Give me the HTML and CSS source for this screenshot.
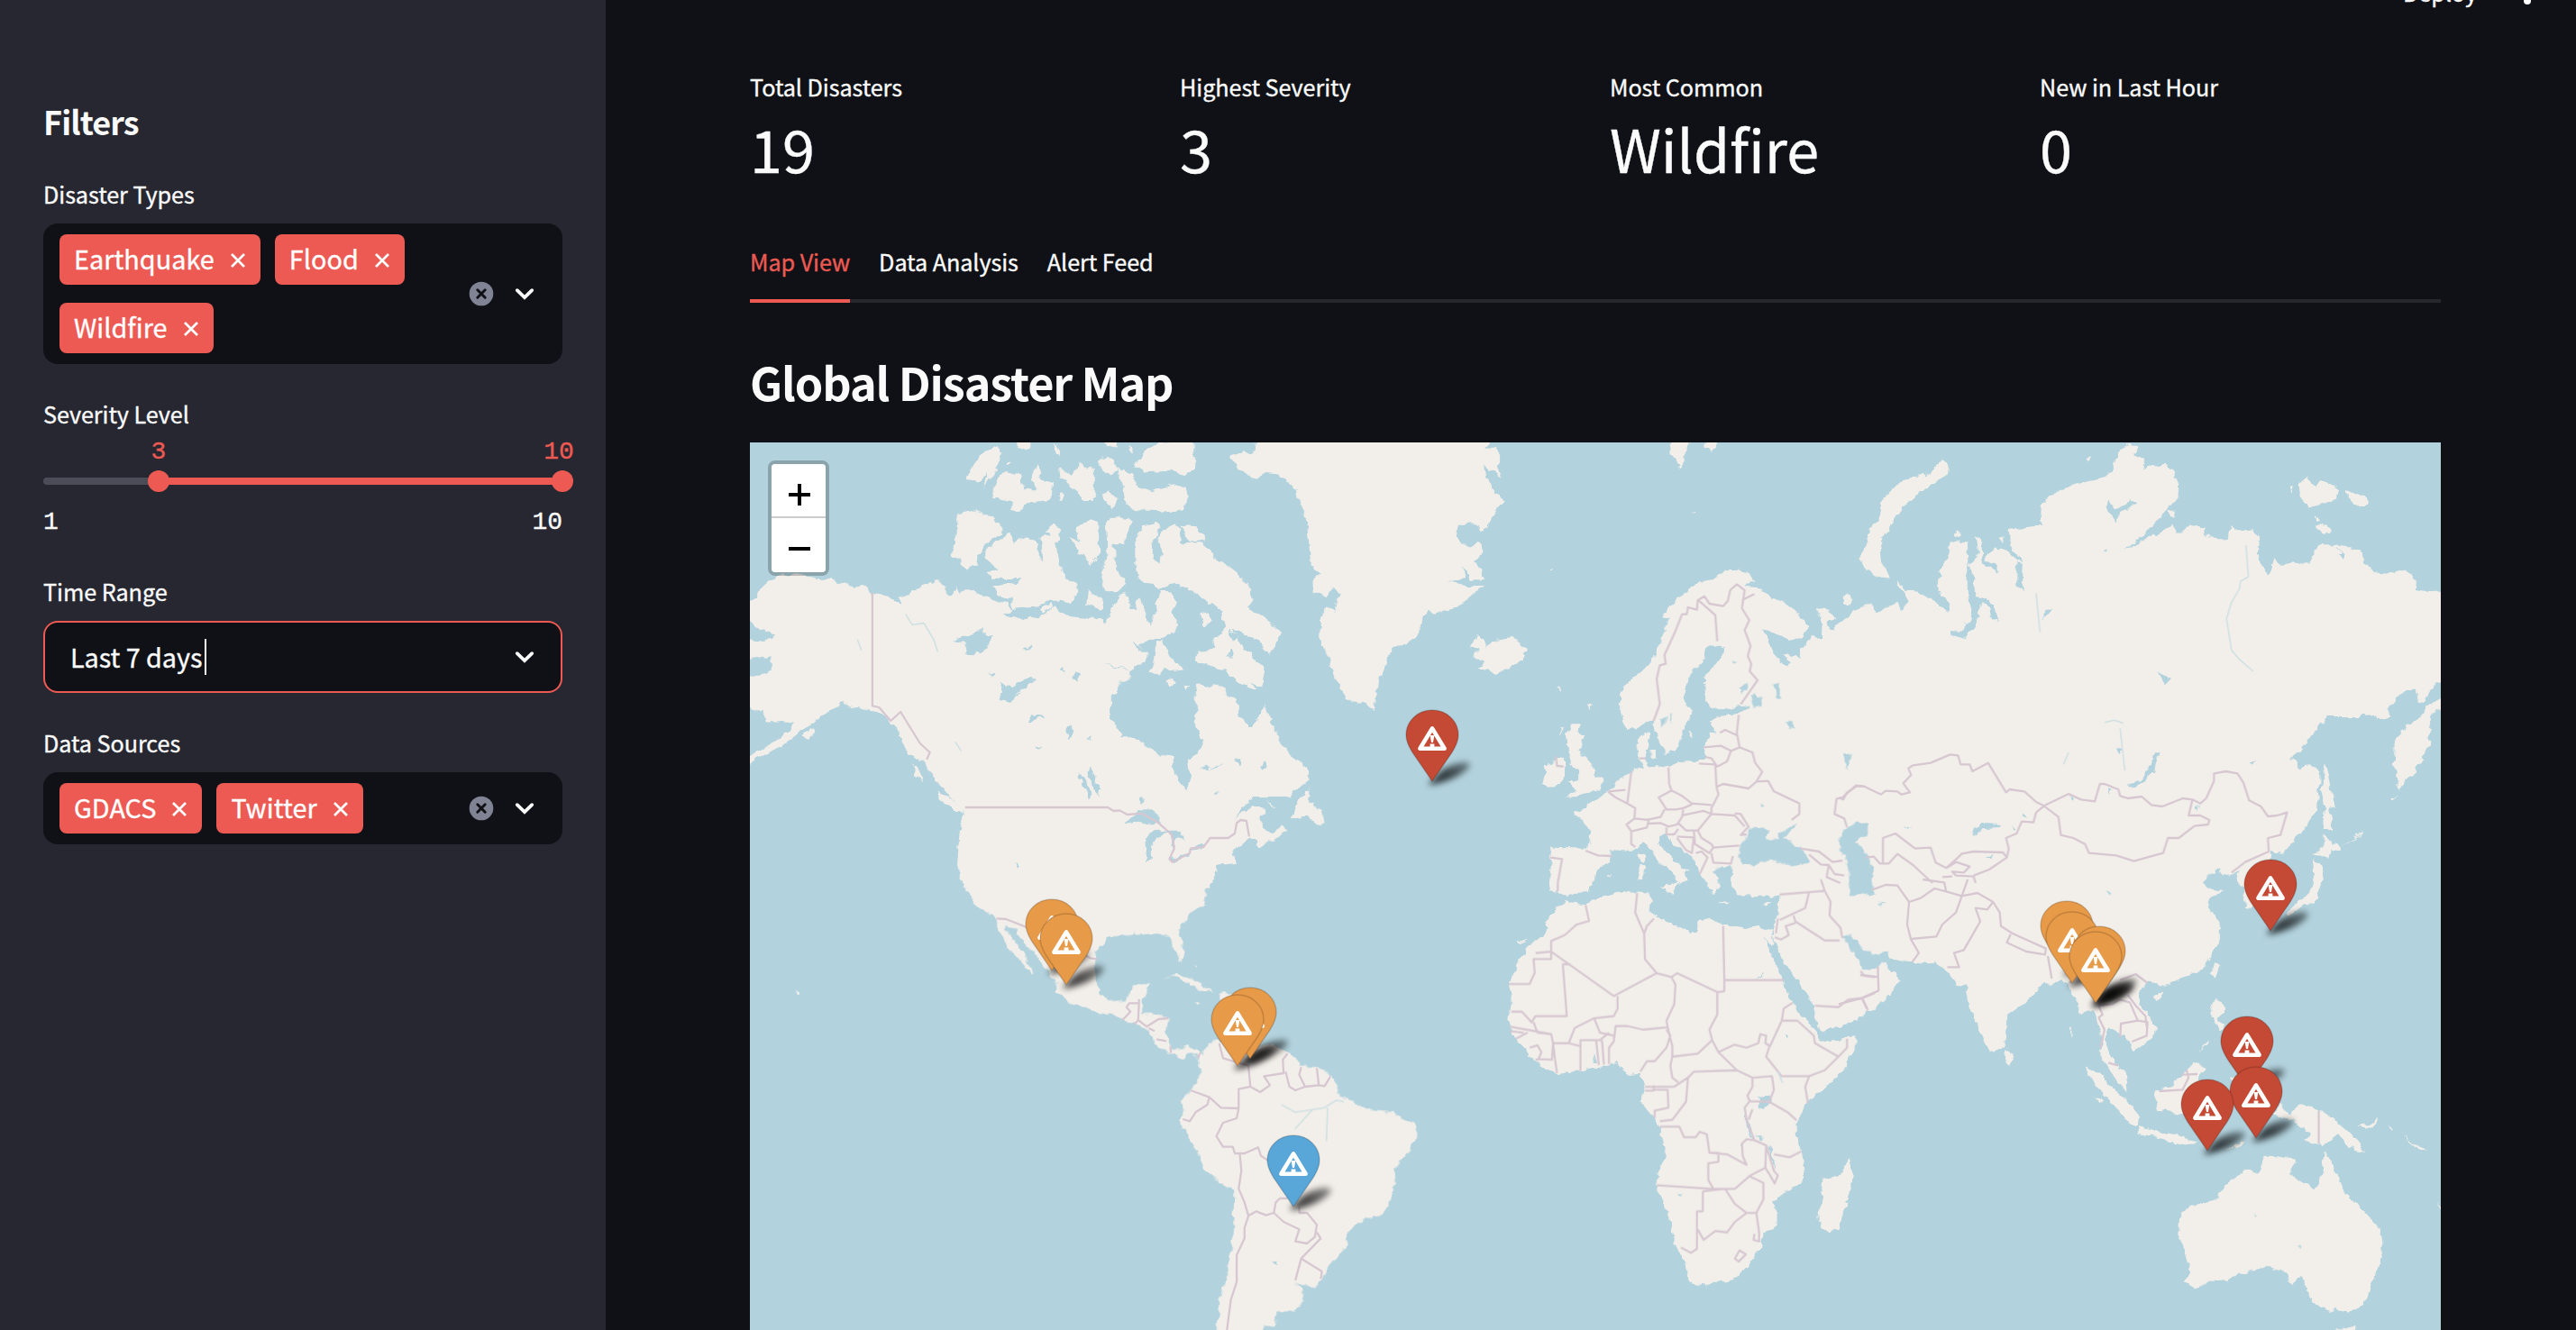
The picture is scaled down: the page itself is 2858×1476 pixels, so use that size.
FILE: index.html
```html
<!DOCTYPE html>
<html lang="en">
<head>
<meta charset="utf-8">
<title>Disaster Dashboard</title>
<link rel="stylesheet" href="styles.css">
</head>
<body>
<svg class="defs" width="0" height="0" aria-hidden="true">
  <symbol id="close" viewBox="0 0 16 16"><path d="M1 1L15 15M15 1L1 15" fill="none" stroke="#fff" stroke-width="2.7"/></symbol>
  <symbol id="clear" viewBox="0 0 28 28"><circle cx="14" cy="14" r="13.3" fill="#808393"/><path d="M9.8 9.8L18.2 18.2M18.2 9.8L9.8 18.2" stroke="#0f1116" stroke-width="3" stroke-linecap="round"/></symbol>
  <symbol id="chevron" viewBox="0 0 24 24"><path d="M3.8 8.2L12 16.2L20.2 8.2" fill="none" stroke="#fafafa" stroke-width="3.8" stroke-linecap="round"/></symbol>
</svg>
<div class="app">
  <aside class="sidebar">
    <h2 class="sidebar-title">Filters</h2>
    <section class="field">
      <div class="label">Disaster Types</div>
      <div class="select">
        <div class="tags">
          <span class="tag"><span>Earthquake</span><svg class="x"><use href="#close"/></svg></span>
          <span class="tag"><span>Flood</span><svg class="x"><use href="#close"/></svg></span>
          <span class="tag"><span>Wildfire</span><svg class="x"><use href="#close"/></svg></span>
        </div>
        <svg class="clear"><use href="#clear"/></svg>
        <svg class="chevron"><use href="#chevron"/></svg>
      </div>
    </section>
    <section class="field field-slider">
      <div class="label">Severity Level</div>
      <div class="slider">
        <div class="track"><div class="thumb low"><span>3</span></div><div class="thumb high"><span>10</span></div></div>
        <div class="range"><span>1</span><span>10</span></div>
      </div>
    </section>
    <section class="field">
      <div class="label">Time Range</div>
      <div class="select focused">
        <span class="value">Last 7 days</span><i class="caret"></i>
        <svg class="chevron"><use href="#chevron"/></svg>
      </div>
    </section>
    <section class="field">
      <div class="label">Data Sources</div>
      <div class="select">
        <div class="tags">
          <span class="tag"><span>GDACS</span><svg class="x"><use href="#close"/></svg></span>
          <span class="tag"><span>Twitter</span><svg class="x"><use href="#close"/></svg></span>
        </div>
        <svg class="clear"><use href="#clear"/></svg>
        <svg class="chevron"><use href="#chevron"/></svg>
      </div>
    </section>
  </aside>
  <main class="main">
    <header class="toolbar"><span>Deploy</span><i class="dot"></i></header>
    <div class="metrics">
      <div class="metric"><div class="label">Total Disasters</div><div class="number">19</div></div>
      <div class="metric"><div class="label">Highest Severity</div><div class="number">3</div></div>
      <div class="metric"><div class="label">Most Common</div><div class="number">Wildfire</div></div>
      <div class="metric"><div class="label">New in Last Hour</div><div class="number">0</div></div>
    </div>
    <nav class="tabs"><span class="tab active">Map View</span><span class="tab">Data Analysis</span><span class="tab">Alert Feed</span></nav>
    <h1 class="title">Global Disaster Map</h1>
    <div class="map">
      <svg class="world" viewBox="832 491 1876 985" width="1876" height="985">
        <defs>
          <filter id="coast" x="0" y="0" width="100%" height="100%"><feTurbulence type="fractalNoise" baseFrequency="0.11" numOctaves="2" seed="4" result="n"/><feDisplacementMap in="SourceGraphic" in2="n" scale="8" xChannelSelector="R" yChannelSelector="G"/><feGaussianBlur stdDeviation="0.6"/></filter>
          <filter id="soft" x="-50%" y="-120%" width="200%" height="340%"><feGaussianBlur stdDeviation="3.6"/></filter>
          <linearGradient id="fade" x1="0" y1="1" x2="1" y2="0"><stop offset="0" stop-opacity=".8"/><stop offset=".45" stop-opacity=".7"/><stop offset="1" stop-opacity=".4"/></linearGradient>
          <g id="shade"><path d="M-4 3L10 -12Q24 -21 38 -21Q46 -19 36 -11Q22 0 -2 4Z" fill="url(#fade)" filter="url(#soft)"/></g>
          <path id="body" d="M0 0L-22 -32C-27 -40 -29 -46 -29 -51.5C-29 -67 -16 -79 0 -79S29 -67 29 -51.5C29 -46 27 -40 22 -32Z" stroke-opacity=".16" stroke="#000" stroke-width="1.5"/>
          <g id="warn"><path d="M0 -58.6L-13.6 -36.2H13.6Z" fill="none" stroke="#fff" stroke-width="4.6" stroke-linejoin="round"/><path d="M-2.4 -51H2.4L1 -43H-1ZM-2.4 -41.6H2.4V-38H-2.4Z" fill="#fff"/></g>
        </defs>
        <rect x="832" y="491" width="1876" height="985" fill="#b2d2dd"/>
        <g filter="url(#coast)">
        <!-- North America and the Arctic -->
        <g class="land" transform="translate(830 480) scale(.43367 .33333)">
          <path d="M-20 568L20 555 30 520 50 495 75 480 110 470 150 478 185 488 215 490 240 505 270 512 292 508 318 533 345 538 365 558 388 573 384 545 405 550 420 530 445 512 470 503 487 485 500 510 512 545 525 540 533 512 540 540 560 522 590 530 610 548 640 562 665 570 680 590 655 608 685 622 725 615 745 612 760 605 785 580 805 600 825 615 860 620 880 615 905 620 912 640 925 610 935 575 950 545 962 530 975 560 980 590 988 595 1000 550 1015 590 1025 640 1040 610 1048 560 1055 525 1085 530 1095 560 1085 600 1100 640 1090 665 1060 680 1035 690 1000 710 1022 735 1015 770 990 775 975 800 978 820 955 830 935 870 925 920 925 960 945 970 955 1015 980 1015 1020 1045 1055 1072 1087 1080 1090 1140 1105 1165 1120 1188 1135 1160 1128 1120 1125 1088 1150 1070 1162 1040 1155 1000 1140 965 1150 930 1145 880 1148 835 1175 845 1205 838 1225 865 1230 885 1252 890 1255 940 1280 978 1300 965 1312 930 1320 905 1335 950 1355 1000 1365 1045 1395 1080 1420 1100 1437 1130 1435 1160 1405 1185 1380 1215 1290 1215 1265 1250 1243 1290 1265 1265 1290 1248 1320 1248 1322 1270 1308 1280 1320 1320 1340 1335 1370 1310 1380 1325 1350 1350 1310 1382 1300 1370 1305 1350 1285 1350 1255 1375 1240 1400 1245 1430 1200 1440 1190 1480 1178 1520H548L545 1480 535 1440 540 1350 543 1300 555 1270 530 1230 500 1195 485 1160 460 1125 452 1095 430 1090 405 1045 380 985 355 950 330 930 305 925 280 918 240 900 215 925 185 945 170 965 150 980 110 1020 70 1055 -10 1110 -10 1085 40 1050 80 1020 105 990 115 965 85 960 45 965 40 925 15 925 -20 890Z"/>
          <path d="M535 268L575 257 600 275 630 280 655 325 610 370 590 405 585 440 555 458 540 420 518 408 532 350 538 300Z"/>
          <path d="M668 333L680 365 705 350 735 360 745 410 755 425 748 345 760 335 785 360 795 420 800 460 843 510 842 535 825 570 800 560 775 560 740 580 680 587 672 555 640 545 628 512 690 500 700 487 625 485 615 462 640 455 605 420 615 385Z"/>
          <path d="M765 325L785 305 798 320 795 360 780 375Z"/>
          <path d="M822 350L850 360 835 320 875 290 895 300 900 400 875 445 850 400Z"/>
          <path d="M915 300L940 280 985 292 960 365 935 368 938 420 950 465 965 510 940 535 912 525 902 480 918 420 918 360Z"/>
          <path d="M990 350L1010 310 1045 300 1052 312 1035 360 1035 415 1055 440 1058 400 1045 350 1060 320 1090 310 1105 320 1110 370 1165 365 1190 410 1220 435 1250 465 1285 520 1290 550 1275 580 1320 615 1365 665 1335 740 1300 690 1240 655 1270 720 1310 770 1325 800 1318 845 1285 830 1265 790 1305 860 1260 840 1215 790 1145 760 1150 725 1195 720 1190 690 1220 650 1210 590 1150 540 1100 500 1050 515 1010 500 990 450Z"/>
          <path d="M1105 308L1145 312 1170 358 1130 365Z"/>
          <path d="M945 115L985 140 1000 180 1035 195 1090 172 1120 185 1125 215 1115 260 1060 262 990 258 965 240 960 180Z"/>
          <path d="M985 115L1005 90 1015 55 1050 33 1140 25 1145 110 1115 145 1080 128 1020 132Z"/>
          <path d="M900 85L935 90 945 130 925 140 900 115Z"/><path d="M905 215L925 190 942 220 935 250Z"/>
          <path d="M825 140L850 105 885 120 885 225 855 225 845 195 800 150 795 115Z"/>
          <path d="M635 160L660 125 695 145 705 190 735 190 725 130 740 100 750 155 782 165 778 225 720 232 690 262 668 255 680 230 625 215Z"/>
          <path d="M605 60L640 45 650 70 630 130 605 190 615 140 585 165 558 155 575 110Z"/>
          <path d="M683 25L720 25 720 45 710 55 690 55ZM780 30L800 75 785 65ZM905 25H945V45L935 48ZM975 40L990 70 975 60ZM870 525L910 560 905 590 865 570ZM1155 605L1175 598 1185 625 1165 645ZM1030 800L1040 760 1045 700 1060 690 1075 745 1112 790 1090 795 1065 780 1050 810ZM1068 830L1085 818 1095 830 1078 845ZM1115 840L1125 840 1120 865ZM742 590L775 570 780 582 750 605ZM793 205L803 200 805 222 795 225ZM662 100L675 98 672 108Z"/>
          <path d="M485 1198L520 1220 550 1255 550 1272 500 1235ZM423 1105L437 1120 448 1165 428 1140ZM380 985L410 1010 430 1080 410 1075ZM138 1010L160 985 172 990 155 1020ZM1390 1285L1405 1240 1435 1180 1435 1230 1465 1255 1475 1300 1460 1305 1430 1280ZM1325 1228L1355 1245 1340 1243Z"/>
        </g>
        <!-- Greenland and Europe -->
        <g class="land" transform="translate(1400 480) scale(.43367 .33333)">
          <path d="M-15 20H590L570 50 600 50 612 85 600 110 612 150 570 110 575 150 600 200 622 225 600 250 585 290 580 320 560 330 540 300 500 310 495 345 530 380 550 360 565 390 545 430 570 490 535 490 515 440 520 490 475 495 520 510 565 510 510 575 440 605 425 590 400 670 370 705 335 715 320 760 300 830 285 928 265 905 225 895 190 830 170 750 148 690 150 620 165 580 185 600 195 540 180 500 150 470 125 440 120 360 112 280 95 220 85 185 45 140 10 135 -15 155 -60 120 -82 80 -45 65 -20 70Z"/>
          <path d="M135 475L170 475 185 510 165 550 135 535Z"/>
          <path d="M550 675L572 695 570 715 600 690 640 680 660 695 675 725 665 760 620 795 600 800 555 785 570 765 540 740 558 725 535 715Z"/>
          <path d="M1040 45L1060 25H1090L1085 80 1072 120 1055 85ZM1130 45L1140 25H1165L1150 65ZM736 465L748 455 745 465ZM1098 262L1108 265 1102 270ZM757 845L767 845 764 865ZM835 905L841 900 838 922Z"/>
          <path d="M930 985L918 930 918 870 930 840 975 795 1005 750 1020 690 1045 620 1020 615 1050 570 1070 540 1100 520 1130 495 1150 490 1185 460 1220 458 1250 475 1260 495 1235 515 1275 520 1300 545 1330 560 1365 595 1390 620 1394 655 1380 688 1355 690 1310 665 1280 655 1300 700 1310 740 1330 770 1345 782 1355 765 1335 740 1350 735 1375 755 1380 720 1410 678 1432 690 1433 640 1420 582 1450 590 1465 620 1445 632 1455 660 1478 655 1482 630 1530 600 1560 570V1540H1325L1280 1548 1240 1543 1215 1533 1200 1500 1205 1460 1195 1440 1150 1460 1175 1490 1160 1540 1140 1500 1120 1475 1115 1440 1090 1405 1045 1360 1040 1335 1015 1340 1015 1370 1035 1395 1060 1430 1095 1465 1080 1465 1085 1490 1068 1505 1060 1470 1010 1420 990 1380 975 1365 950 1395 895 1390 890 1425 855 1460 850 1493 835 1530 800 1533 780 1548 765 1533 738 1528 735 1500 740 1440 735 1410 740 1382 835 1385 840 1350 835 1320 825 1290 800 1280 795 1265 832 1255 835 1235 850 1230 880 1195 900 1185 910 1160 945 1125 975 1115 960 1060 962 1020 990 1000 990 1040 980 1080 985 1105 1000 1110 1040 1115 1080 1090 1115 1100 1135 1080 1132 1050 1145 1000 1165 1000 1145 965 1165 945 1215 940 1250 915 1225 905 1155 925 1135 890 1132 820 1150 785 1180 745 1185 715 1155 705 1135 720 1130 760 1100 800 1082 850 1080 900 1100 930 1070 1020 1060 1060 1030 1070 1020 1040 1005 1000 1000 955 960 985Z"/>
          <path d="M780 1000L795 970 812 970 808 1000 828 1005 820 1040 805 1060 830 1080 850 1120 855 1145 875 1155 865 1195 835 1200 800 1210 780 1220 800 1190 785 1165 812 1155 812 1120 790 1110 790 1060 782 1040ZM755 1078L775 1080 775 1140 765 1170 730 1182 718 1170 725 1130 720 1105 745 1100ZM762 980L770 985 762 1015ZM965 1400L978 1400 978 1430 968 1430ZM965 1440L980 1440 978 1485 965 1485ZM995 1060L1010 1055 1010 1085 995 1080ZM1095 990L1100 992 1095 1018ZM885 1475L897 1470 893 1480Z"/>
          <path d="M1487 545L1500 537 1510 555 1500 575 1487 565Z"/>
        </g>
        <!-- Northern Asia -->
        <g class="land" transform="translate(2040 480) scale(.43367 .33333)">
          <path d="M-10 650L5 630 40 595 75 570 95 600 120 580 150 570 160 590 175 560 170 525 205 530 240 555 277 600 285 570 265 545 255 510 262 480 255 460 275 430 285 365 300 358 330 368 330 440 345 430 355 400 350 345 365 365 368 430 375 445 410 465 400 435 380 425 380 405 400 385 430 395 455 425 468 430 455 400 438 375 435 320 480 315 520 308 515 270 520 240 545 205 590 180 630 165 680 150 700 125 705 95 715 60 745 35 768 50 755 75 785 90 780 120 800 110 835 108 855 130 870 170 868 215 850 245 820 285 800 315 778 340 760 365 800 345 830 325 855 305 870 335 895 310 935 320 935 345 970 355 995 355 1000 310 1030 330 1060 325 1075 350 1072 400 1085 450 1102 475 1115 420 1130 440 1165 430 1190 440 1210 435 1212 390 1235 372 1285 375 1335 395 1345 430 1370 465 1400 470 1435 458 1465 470 1478 495 1475 525 1500 530 1560 530V828L1525 835 1520 860 1500 890 1483 900 1478 860 1445 862 1425 890 1405 925 1412 945 1385 955 1345 935 1320 948 1250 948 1225 985 1195 1030 1175 1065 1155 1085 1170 1095 1180 1120 1210 1105 1230 1130 1230 1165 1222 1260 1195 1310 1160 1370 1135 1400 1105 1395 1100 1430 1080 1520 1075 1573 1040 1583 1035 1520 1015 1490 1025 1465 985 1480 975 1450 945 1480 925 1500 925 1520H-10Z"/>
          <path d="M1560 875L1510 905 1490 945 1440 995 1422 1040 1420 1100 1433 1190 1455 1150 1475 1130 1480 1105 1500 1090 1498 1060 1518 1045 1508 1010 1515 995 1510 960 1525 925 1560 925Z"/>
          <path d="M265 88L282 105 278 140 245 170 205 200 175 235 150 270 135 310 115 345 105 390 108 430 130 485 100 480 70 460 52 420 68 380 80 330 105 280 115 215 150 170 185 145 225 140 245 115Z"/>
          <path d="M1198 148L1220 185 1232 155 1280 185 1275 220 1245 235 1205 250 1180 215 1178 175ZM1298 195L1350 215 1355 235 1330 245 1300 215ZM1225 310L1240 298 1258 325 1255 340 1225 320ZM1217 275L1227 290 1220 297ZM150 490L172 525 158 520ZM297 340L305 325 315 345 300 350ZM845 260L862 260 860 280 848 280ZM410 350L418 345 418 368ZM1155 178L1161 180 1159 205ZM635 85L645 78 640 92Z"/>
          <path d="M1248 1105L1256 1150 1270 1250 1254 1240 1262 1320 1240 1320 1245 1250 1235 1200 1240 1130ZM1240 1340L1285 1385 1260 1395 1255 1418 1215 1405 1240 1385ZM1215 1422L1235 1440 1240 1488 1225 1528 1218 1570 1190 1573 1165 1598 1150 1615 1142 1600 1180 1560 1205 1528 1218 1470ZM1415 1220L1427 1203 1420 1222ZM1285 1380L1345 1325 1342 1333ZM1370 1300L1375 1305Z"/>
        </g>
        <!-- The Americas, south of 37°N -->
        <g class="land" transform="translate(830 976) scale(.43367 .33333)">
          <path d="M543 -20L560 40 585 90 625 120 645 175 665 230 700 270 715 305 730 318 715 270 695 225 665 180 660 155 680 160 700 200 735 250 765 300 790 345 785 375 830 410 905 450 930 445 960 470 1000 485 1025 505 1045 550 1075 575 1110 597 1125 575 1150 590 1155 625 1155 660 1130 700 1110 740 1115 780 1102 800 1130 860 1170 970 1245 1040 1240 1180 1225 1330 1205 1400 1200 1520H1310L1320 1485 1350 1490 1352 1442 1400 1435 1422 1400 1415 1360 1400 1345 1440 1357 1465 1345 1475 1310 1530 1220 1534 1175 1559 1150 1580 1128 1619 1120 1644 1075 1656 960 1709 870 1712 850 1704 810 1680 800 1654 775 1584 768 1549 740 1514 720 1509 690 1489 650 1459 625 1419 622 1384 580 1344 550 1280 555 1240 560 1200 535 1175 540 1165 585 1150 570 1125 555 1085 570 1070 520 1075 460 1050 448 1005 450 1010 400 1028 350 985 355 970 400 930 405 905 385 885 330 890 240 925 190 985 185 1050 180 1080 195 1100 260 1112 278 1115 240 1100 170 1130 115 1165 80 1175 10 1185 -20Z"/>
          <path d="M1060 335L1095 317 1140 330 1190 375 1155 372 1120 340 1085 325ZM1200 378L1260 380 1285 410 1210 405ZM1142 402L1163 408 1152 414ZM122 368L134 382 126 390ZM70 333L76 336ZM115 357L120 360ZM1145 283L1150 298 1143 290Z"/>
        </g>
        <!-- Africa -->
        <g class="land" transform="translate(1400 976) scale(.43367 .33333)">
          <path d="M780 68L750 100 730 140 725 180 680 225 660 270 630 345 642 400 628 465 640 515 680 570 690 600 755 648 820 635 880 618 912 612 932 648 965 645 982 680 970 740 1005 795 1020 830 1028 880 1035 920 1015 965 1008 1020 1040 1110 1055 1210 1080 1270 1092 1330 1115 1357 1150 1340 1185 1342 1220 1320 1255 1265 1280 1225 1283 1180 1318 1155 1318 1110 1310 1070 1345 1035 1385 1005 1388 960 1380 900 1370 860 1368 800 1395 745 1450 685 1490 630 1520 550 1523 520 1490 530 1440 543 1425 535 1420 510 1400 480 1375 450 1365 420 1345 390 1335 335 1310 270 1282 190 1305 228 1310 205 1305 170 1270 155 1235 165 1180 150 1140 130 1118 145 1115 175 1100 178 1060 150 1010 125 988 105 998 75 990 45 960 40 905 45 860 60 830 82 800 78Z"/>
          <path d="M1500 930L1515 990 1500 1050 1475 1160 1448 1177 1428 1160 1422 1110 1438 1065 1430 1030 1438 1000 1485 975ZM1018 25L1045 18 1072 0 1050 48ZM1165 75L1198 78 1185 86ZM1280 82L1302 78 1290 92ZM1135 5L1150 0 1165 45 1155 50ZM655 205L675 205 665 215ZM618 210L626 215Z"/>
        </g>
        <!-- Middle East, southern Asia and Oceania -->
        <g class="land" transform="translate(2040 976) scale(.43367 .33333)">
          <path d="M-151 -20V60L-158 120 -168 165 -164 205 -146 260 -116 320 -76 390 -61 440 -48 505 4 490 50 468 70 435 100 425 130 385 160 335 145 310 120 290 112 262 125 245 130 265 190 278 250 275 280 310 300 350 325 355 335 420 355 490 385 575 400 582 425 550 430 455 460 430 520 350 565 340 590 345 595 380 610 410 620 450 650 430 665 490 675 530 668 580 690 625 705 670 742 710 735 645 700 600 690 570 680 530 695 490 715 510 745 540 755 575 770 555 805 530 810 490 795 450 770 410 770 370 790 340 830 350 880 330 930 300 950 265 975 200 975 150 945 95 950 60 985 40 950 30 925 0V-20Z"/>
          <path d="M430 560L450 600 440 620 425 610ZM962 280L975 285 962 335 952 315ZM805 378L832 378 815 405 802 390ZM628 628L665 645 700 690 740 740 768 785 765 822 740 810 700 745 660 690ZM765 825L820 840 860 850 920 875 890 880 820 862 770 845ZM815 700L845 695 880 650 910 608 940 630 920 660 925 700 900 760 875 782 820 770 808 730ZM960 400L982 405 985 440 970 465 990 490 970 505 962 460 948 450ZM918 575L945 535 942 548ZM1000 660L1030 650 1020 690ZM1130 740L1150 780 1185 748 1235 770 1270 800 1300 835 1350 905 1320 900 1275 850 1240 882 1190 865 1205 850 1160 800 1115 785ZM990 905L1040 868 1030 885ZM1325 822L1360 815 1378 795 1378 810 1350 830ZM1408 815L1418 835 1412 835ZM1440 850L1505 905 1490 905ZM950 720L1000 715 1000 730 960 800 950 760ZM592 490L597 495 594 530ZM640 680L650 695ZM655 720L672 745 665 745Z"/>
          <path d="M1245 905L1262 960 1280 990 1295 1050 1335 1090 1385 1165 1392 1240 1375 1310 1345 1415 1300 1445 1275 1425 1260 1440 1215 1410 1195 1360 1185 1320 1160 1355 1145 1310 1100 1290 1060 1300 1010 1320 995 1340 950 1340 915 1362 885 1340 898 1310 885 1240 870 1190 872 1110 910 1085 965 1065 990 1015 1040 965 1075 980 1085 940 1090 920 1125 922 1170 935 1155 980 1190 1010 1220 1030 1235 985ZM1275 1490L1300 1495 1322 1485V1520H1280ZM1530 1075L1550 1095V1105Z"/>
        </g>
        <!-- Lakes and inland seas -->
        <g class="water" transform="translate(830 480) scale(.43367 .33333)">
          <path d="M-10 610L20 650 68 672 45 695 -10 690ZM-10 760L58 745 60 790 30 812 -10 805ZM525 690L575 670 600 653 605 675 625 672 615 715 575 742 550 735 560 705ZM645 825L672 850 710 820 738 820 715 845 670 893 640 888 655 865ZM710 968L730 940 760 945 720 965ZM875 1115L890 1150 902 1190 895 1210 880 1170 868 1140ZM845 1125L860 1155 880 1210 875 1218 855 1180ZM960 1308L985 1275 1000 1255 1030 1255 1055 1275 1055 1300 1020 1305 990 1295ZM1015 1350L1045 1325 1080 1330 1045 1345 1035 1380 1035 1420 1020 1430ZM1075 1325L1105 1325 1118 1355 1095 1350 1090 1390 1080 1350ZM1078 1420L1130 1400 1125 1412 1085 1432ZM1130 1385L1165 1372 1165 1383 1132 1392ZM830 820L838 795 848 810 838 830ZM800 790L805 780 812 800ZM612 795L628 805 622 812ZM815 990L825 970 832 1000 822 1025ZM862 1030L878 1005 875 1025ZM730 1045L750 1052 735 1055ZM1310 1110L1325 1098 1330 1115 1315 1125ZM1245 1090L1262 1090 1260 1112ZM1150 1120L1185 1110 1180 1122ZM1000 1220L1012 1215 1010 1240ZM685 1430L697 1440 692 1448ZM1195 1205L1208 1188 1200 1205ZM1225 740L1235 720 1242 748ZM1230 655L1255 680 1240 695ZM680 675L688 690ZM700 720L730 705 722 725ZM985 700L1020 730 1000 725ZM905 765L980 795 940 782ZM1180 1125L1212 1100 1200 1115Z"/>
        </g>
        <g class="water" transform="translate(1400 480) scale(.43367 .33333)">
          <path d="M1218 1410L1230 1370 1245 1325 1265 1310 1300 1325 1290 1345 1305 1355 1330 1345 1365 1375 1395 1400 1400 1430 1375 1443 1340 1438 1305 1420 1260 1438 1230 1435ZM1320 1340L1370 1300 1355 1330 1335 1350ZM1250 880L1262 865 1282 885 1278 910 1258 918ZM1305 835L1325 830 1325 870 1332 890 1318 885ZM1342 965L1352 955 1365 985 1350 980ZM1018 960L1035 945 1035 960 1020 985ZM1042 940L1050 935 1045 970ZM1220 850L1240 835 1242 850 1228 865ZM1275 1235L1288 1242 1282 1248ZM1205 755L1215 765 1208 770ZM1160 1450L1205 1448 1195 1455ZM1488 1065L1510 1070 1495 1125ZM1175 1455L1200 1460 1195 1500 1165 1500Z"/>
          <path d="M1480 1345L1495 1315 1520 1300 1550 1305 1550 1340 1520 1360 1545 1400 1565 1445 1560 1485 1565 1538 1500 1540 1505 1490 1498 1440 1480 1390Z"/>
        </g>
        <g class="water" transform="translate(2040 480) scale(.43367 .33333)">
          <path d="M328 440L340 440 350 545 375 553 395 570 400 610 410 630 392 625 385 585 370 565 357 600 355 635 325 687 290 675 285 660 310 662 335 620 340 585 330 550ZM455 430L470 440 468 500 478 530 455 505ZM690 225L705 255 735 240 745 222 760 240 715 265 712 300 700 280 685 262ZM728 395L775 345 770 365ZM740 1178L770 1160 795 1110 812 1060 820 1062 808 1125 780 1160 755 1183ZM345 1340L345 1320 365 1305 415 1308 412 1314 365 1318 350 1345ZM375 1408L400 1405 395 1418ZM520 630L530 595 545 590ZM545 545L575 540ZM525 510L533 535ZM540 655L558 650ZM815 795L850 820 835 840ZM678 392L688 388 688 398ZM1048 1100L1070 1092 1055 1112ZM470 1265L488 1280 470 1275ZM1270 385L1290 395 1280 410 1290 425 1298 400 1285 388ZM588 1210L600 1212 595 1225ZM690 1185L700 1190 695 1208ZM440 1310L455 1325 448 1328ZM912 1250L922 1240 918 1258ZM165 1312L183 1315 175 1320ZM710 1045L728 1050 718 1068Z"/>
        </g>
        <g class="water" transform="translate(1400 976) scale(.43367 .33333)">
          <path d="M1270 725L1300 722 1302 742 1285 768 1270 762ZM1235 760L1243 800 1260 868 1252 862 1240 820ZM1297 885L1305 900 1311 965 1303 945ZM1225 880L1232 870 1230 890ZM1340 512L1348 517 1342 522ZM1062 1048L1076 1045 1068 1055ZM25 1268L35 1265 36 1280ZM850 575L858 610 850 608ZM1265 850L1282 862 1275 866ZM300 888L318 880ZM195 788L206 800ZM60 745L72 755ZM1268 330L1285 310 1280 325ZM1415 100L1425 108Z"/>
        </g>
        <g class="water" transform="translate(2040 976) scale(.43367 .33333)">
          <path d="M10 190L35 183 55 222 85 247 125 240 120 262 95 300 62 297 48 262 25 228ZM685 38L698 42 692 50ZM105 78L118 80 110 88ZM1060 1115L1072 1115 1066 1120ZM1170 1220L1182 1222 1178 1230ZM1175 1245L1182 1250ZM1150 1290L1158 1288ZM738 497L748 502ZM898 202L908 204Z"/>
        </g>
        </g>
        <!-- Borders -->
        <g class="border" transform="translate(830 480) scale(.43367 .33333)">
          <path d="M318 533V910L335 915 365 960 390 930 440 1035 465 1065 457 1088M555 1248H920L935 1260 950 1258 970 1272 1008 1268 1050 1300 1085 1340 1090 1385 1078 1420 1085 1430 1130 1400 1132 1385 1165 1380 1182 1350H1228L1245 1335 1250 1300 1260 1290 1275 1293 1282 1345"/>
        </g>
        <g class="border" transform="translate(1400 480) scale(.43367 .33333)">
          <path d="M1002 960L1018 905 1010 820 1018 775 1033 770 1030 740 1055 670 1075 605 1087 605 1090 582 1113 590 1115 558 1132 545 1145 570 1180 578 1192 560 1198 525 1215 505 1235 525 1228 585 1247 625 1235 658 1250 710 1243 745 1252 770 1248 795 1268 825 1225 905M1118 560L1160 608 1165 695M1228 558L1260 538M1220 940L1215 1000 1222 1048 1255 1065 1262 1100 1280 1130 1265 1162 1295 1160 1310 1195 1375 1235 1375 1270 1355 1290M1172 1000L1185 990 1215 1008M1130 1048L1175 1043 1200 1060 1222 1048M1200 1060L1190 1095 1165 1112 1150 1085 1135 1080M1118 1102L1160 1105 1163 1180 1168 1205 1150 1250 1150 1270M1163 1180L1180 1170 1245 1185 1265 1162M1040 1115L1042 1170 1048 1192 1075 1210 1100 1235 1150 1240M1048 1192L1015 1215 1035 1255 1060 1255 1080 1250 1100 1238M965 1085H982M945 1130L940 1180 935 1235 955 1250 953 1285 933 1305 945 1328 985 1315 990 1290 953 1285M985 1290L1020 1280 1030 1255M990 1302L1020 1300 1040 1312 1062 1305 1075 1280 1078 1255M1075 1275L1130 1260 1150 1270 1115 1325 1085 1325 1065 1300M1035 1315L1035 1338 1055 1338 1065 1320M885 1195L905 1215 935 1235M885 1195L930 1190M1150 1270L1210 1275 1235 1312M1210 1268L1225 1270 1245 1312 1225 1340 1240 1338M1115 1325L1125 1350 1150 1370 1155 1382 1190 1378 1222 1375M1062 1345L1105 1348 1100 1400 1085 1390 1062 1350M1105 1325L1108 1370 1145 1400 1155 1382M1150 1400L1155 1432 1200 1435 1205 1410M1110 1400L1125 1395 1140 1415 1120 1470M945 1330V1370L955 1380M828 1392L860 1408 895 1410M737 1415L768 1420 757 1500 757 1528M752 1078L755 1110 772 1112M1378 1385L1425 1395 1460 1430 1485 1425M1400 1405L1430 1438 1450 1440 1445 1480 1480 1500M1450 1440L1465 1470 1490 1475M1497 1315L1490 1285 1465 1270 1470 1220 1485 1215 1520 1175 1540 1178"/>
        </g>
        <g class="border" transform="translate(2040 480) scale(.43367 .33333)">
          <path d="M0 1215L12 1222 20 1200 45 1178 65 1178 108 1205 120 1193 150 1195 160 1205 182 1198 165 1168 185 1140 178 1118 190 1108 235 1100 285 1072 305 1075 312 1105 335 1105 342 1128 382 1100 428 1198 437 1188 475 1195 505 1230 525 1243 588 1203 620 1222 655 1228 668 1170 680 1170 715 1188 720 1210 740 1218 775 1212 800 1240 828 1245 880 1218 905 1222 925 1235 940 1218 960 1160 960 1135 990 1128 1020 1135 1035 1165 1050 1225 1080 1245 1098 1278 1122 1275 1147 1265 1130 1340 1098 1350 1100 1395 1040 1430 1005 1465M525 1243L505 1265 498 1298 468 1295 455 1335 428 1350 435 1385 430 1415 385 1455 345 1475M525 1243L562 1280 568 1340 600 1350 630 1370 640 1400 710 1408 755 1427 830 1400 842 1350 870 1350 910 1310 945 1305 948 1290 925 1275 895 1275 905 1222M113 1435V1350L145 1335 195 1385 235 1382 248 1432 275 1450 305 1415 315 1402 345 1395 420 1398 430 1415M70 1415L90 1412 105 1435H128L150 1403 190 1440 240 1500M275 1450L300 1430 335 1445 320 1465 290 1462 300 1475 345 1478 350 1500M265 1480L290 1478M1000 1490"/>
        </g>
        <g class="border" transform="translate(830 976) scale(.43367 .33333)">
          <path d="M635 130L660 132 710 158 760 200M860 250L875 262 893 265M958 468L978 440 968 425 975 412H1000V398M1000 412L998 468 988 482M998 468L1020 490 1050 465 1075 462M1040 505L1025 495M1045 532L1070 538M1080 555L1082 578M1150 595L1158 575M1205 545L1215 595 1240 605 1280 620 1285 690 1255 698 1255 762 1210 760 1180 725 1132 702M1180 725L1175 750 1145 775 1130 805 1112 798M1255 762L1250 795 1215 810 1198 855 1215 890 1240 890 1245 912H1270L1305 892 1312 920 1330 935M1285 690L1310 708 1335 685 1320 655 1370 645 1368 600 1380 580M1375 640L1385 690 1400 702 1425 690 1410 650 1415 625M1425 690L1460 685 1455 628M1460 685L1475 688 1490 655M1258 915L1262 970 1255 1030 1270 1075 1280 1120 1300 1105 1325 1118 1345 1110 1350 1075 1360 1062 1380 1062M1280 1120L1270 1160 1270 1195 1250 1250 1250 1340 1235 1400 1225 1500M1345 1110L1370 1140 1410 1165 1400 1205 1430 1212 1450 1190 1455 1150 1430 1110H1410V1090M1455 1175L1465 1195 1415 1262 1400 1335M1415 1262L1468 1305 1465 1330"/>
        </g>
        <g class="border" transform="translate(1400 976) scale(.43367 .33333)">
          <path d="M828 85L837 138 805 150 775 185 740 205V265H695L698 310 685 348H632M740 240L900 388 1010 312 980 265 978 180 955 110 960 45M740 240L700 245M978 180L985 155 1003 130M768 282H790M770 285L780 455H700L690 475 665 440H638M910 388V430L900 455 850 462 865 510 900 520M850 462L800 495 785 545H745L740 515 635 490M695 475L705 510 740 515M635 505L670 510M785 545L815 555V535H865L888 510M815 535L815 638M855 535L862 618M870 535L875 615M888 615V560L900 540 905 488 935 488 975 500 1038 492 1035 470 1055 415 1058 350 1048 325 1062 312 1165 375 1183 372V335H1335M1183 335L1180 155M1010 312L1048 325M745 545L750 600 755 645M745 545L742 600 708 598 715 575 705 552 685 560M708 598L700 600M650 530L680 510M1165 375V450L1145 500 1152 535 1168 575 1215 635 1105 640 1090 660 1055 690H980M1168 575L1208 550 1240 560 1270 545 1275 515 1290 520 1288 545 1300 555 1330 470 1335 430 1358 410M1330 470L1370 470 1412 520 1415 545 1475 590 1440 635 1400 655 1330 655 1290 590 1300 550M1475 590L1497 560V530M1400 655L1390 690 1397 745M1215 635L1255 660 1305 655 1310 700 1298 740 1248 738 1242 720 1255 690V660M1298 740L1345 775 1368 802M1038 492L1045 530 1050 555 1050 590 1045 620 1050 660 1065 675M1035 500L1045 520 1035 560 1005 605 985 605 968 640M1050 590L1115 580 1152 535M1090 660L1085 740 1050 800 1018 805M980 703H1002V685M1002 700L1038 700 1040 760 1005 770V795M1018 823H1068L1080 858H1110L1120 840 1138 848 1145 910 1190 915 1240 950 1230 920 1228 880 1240 865 1260 868 1290 885 1288 960 1250 985 1210 1030 1150 1030 1010 1018M1145 910H1168V940L1142 945V1000L1155 1030M1248 738L1235 760 1240 800 1260 868M1255 765L1245 800M1290 885L1310 970 1320 985 1312 1012 1300 985 1288 960M1310 915L1350 925 1380 905M1128 1038L1185 1030 1210 1080 1240 1110 1265 1110 1283 1065V1010L1250 990M1128 1038V1105H1113V1230L1098 1243 1072 1225M1115 1165L1130 1200 1160 1170 1190 1175 1210 1140 1240 1110M1265 1110L1272 1175 1272 1205 1258 1200 1260 1180M1210 1262L1222 1235 1238 1248 1220 1272ZM1325 50L1400 42 1440 38 1455 75 1452 120 1480 160 1485 195M1400 42L1390 95 1325 135M1360 120L1365 140 1440 203H1478M1365 145L1340 155 1348 185 1328 200 1312 192M1320 130L1315 180M1415 420L1475 425 1500 400 1535 395 1550 435M1535 395L1568 378M1532 305L1540 320 1568 325M1430 0L1440 38"/>
        </g>
        <g class="border" transform="translate(2040 976) scale(.43367 .33333)">
          <path d="M85 35L120 18 150 20 180 75 175 150 185 200 205 245 188 275M180 75L210 62 245 30 275 40 315 55 300 110 265 150 250 190 185 198M275 40L270 10 215 0M315 55L330 0M315 55L355 45 395 75 380 100 350 95 362 140 320 235 295 245 308 292H278M395 75L412 110 415 155 445 180 530 230 528 250 480 240 430 210 440 182M535 255L545 330M590 345L600 330M665 420L675 450 665 460 680 500 670 560M665 420L700 415 720 400 745 410 765 470 790 475 788 520 750 540M720 525L722 480 765 470M740 385L760 420 785 455 788 490M720 335L760 315 790 345M690 610L715 620M820 705L880 700 895 660 890 635M878 650L918 648M1228 770V880M60 395L72 430M100 290L102 370 60 395 0 415M55 318L102 325"/>
        </g>
        <g class="river">
          <path transform="translate(2040 480) scale(.43367 .33333)" d="M1042 375L1048 480 1028 495 1025 520 1005 565 992 620 1005 725 1025 755 1060 795M505 535L515 665M680 965L705 958 728 968M720 985L732 1125M575 1105L588 1065"/>
          <path transform="translate(830 480) scale(.43367 .33333)" d="M403 605L420 640 450 635 475 690 485 730M290 725L280 690M530 1030L545 1060"/>
          <path transform="translate(1400 976) scale(.43367 .33333)" d="M50 750L85 775 160 760 190 735 210 740M85 830L130 765M165 870L168 760M1320 640L1332 678"/>
        </g>
        <g class="shadows">
          <use href="#shade" x="1589" y="867"/><use href="#shade" x="1167" y="1077"/><use href="#shade" x="1183" y="1093"/><use href="#shade" x="1387" y="1175"/><use href="#shade" x="1373" y="1183"/><use href="#shade" x="1435" y="1339"/><use href="#shade" x="2519" y="1033"/><use href="#shade" x="2293" y="1079"/><use href="#shade" x="2299" y="1091"/><use href="#shade" x="2329" y="1107"/><use href="#shade" x="2325" y="1113"/><use href="#shade" x="2325" y="1113"/><use href="#shade" x="2493" y="1207"/><use href="#shade" x="2503" y="1263"/><use href="#shade" x="2449" y="1277"/>
        </g>
        <g class="pins">
          <g class="red" transform="translate(1589 867)"><use href="#body"/><use href="#warn"/></g>
          <g class="orange" transform="translate(1167 1077)"><use href="#body"/><use href="#warn"/></g>
          <g class="orange" transform="translate(1183 1093)"><use href="#body"/><use href="#warn"/></g>
          <g class="orange" transform="translate(1387 1175)"><use href="#body"/><use href="#warn"/></g>
          <g class="orange" transform="translate(1373 1183)"><use href="#body"/><use href="#warn"/></g>
          <g class="blue" transform="translate(1435 1339)"><use href="#body"/><use href="#warn"/></g>
          <g class="red" transform="translate(2519 1033)"><use href="#body"/><use href="#warn"/></g>
          <g class="orange" transform="translate(2293 1079)"><use href="#body"/><use href="#warn"/></g>
          <g class="orange" transform="translate(2299 1091)"><use href="#body"/><use href="#warn"/></g>
          <g class="orange" transform="translate(2329 1107)"><use href="#body"/><use href="#warn"/></g>
          <g class="orange" transform="translate(2325 1113)"><use href="#body"/><use href="#warn"/></g>
          <g class="red" transform="translate(2493 1207)"><use href="#body"/><use href="#warn"/></g>
          <g class="red" transform="translate(2503 1263)"><use href="#body"/><use href="#warn"/></g>
          <g class="red" transform="translate(2449 1277)"><use href="#body"/><use href="#warn"/></g>
        </g>
      </svg>
      <div class="zoom"><button class="plus" aria-label="Zoom in"></button><button class="minus" aria-label="Zoom out"></button></div>
    </div>
  </main>
</div>
</body>
</html>
```
FILE: styles.css
```css
* { box-sizing: border-box; }
body { margin: 0; overflow: hidden; background: #0f1116; color: #fafafa; font-family: "Noto Sans CJK JP", "Noto Sans CJK SC", "Noto Sans", sans-serif; font-size: 25.2px; letter-spacing: -0.06px; -webkit-text-stroke: 0.35px currentColor; }
h1, h2 { margin: 0; font-weight: 700; -webkit-text-stroke: 0; }
svg { display: block; flex: none; }
.defs { position: absolute; }
.app { display: flex; width: 2858px; height: 1476px; overflow: hidden; }

.sidebar { width: 672px; flex: none; padding: 110px 48px 0; background: #262730; }
.sidebar-title { font-size: 36px; line-height: 48px; margin-bottom: 37px; letter-spacing: -0.9px; }
.label { line-height: 40px; white-space: nowrap; }
.field { margin-bottom: 35px; }
.field .label { margin-bottom: 13px; }
.select { display: flex; align-items: center; min-height: 80px; padding: 12px 30px 12px 18px; border-radius: 16px; background: #0f1116; }
.select.focused { height: 80px; padding: 0 28px 0 28px; border: 2px solid #ec5a53; }
.tags { display: flex; flex-wrap: wrap; gap: 20px 16px; flex: 1; }
.tag { display: flex; align-items: center; gap: 18px; height: 56px; padding: 0 17px 0 16px; border-radius: 8px; background: #ec5a53; color: #fff; font-size: 28.8px; line-height: 53px; letter-spacing: 0.03px; }
.tag > span { height: 56px; }
.x { width: 16px; height: 16px; margin-top: 2px; }
.clear { width: 28px; height: 28px; margin-right: 22px; }
.chevron { width: 24px; height: 24px; }
.focused .chevron { margin-left: auto; }
.value { font-size: 28.8px; line-height: 76px; }
.caret { width: 2px; height: 40px; margin-left: 3px; background: #fff; }

.field-slider { height: 162px; }
.field-slider .label { margin-bottom: 0; }
.slider { padding-top: 51px; font-family: "Liberation Mono", monospace; font-size: 28px; letter-spacing: 0; }
.track { position: relative; height: 8px; border-radius: 4px; background: linear-gradient(90deg, #4b4c57 128px, #ec5a53 128px); }
.thumb { position: absolute; top: -8px; width: 24px; height: 24px; border-radius: 50%; background: #ec5a53; }
.thumb.low { left: 116px; }
.thumb.high { left: 564px; }
.thumb span { position: absolute; bottom: 24px; left: 50%; line-height: 40px; color: #ec5a53; transform: translateX(-50%); }
.thumb.high span { left: 8px; }
.range { display: flex; justify-content: space-between; padding-top: 22px; line-height: 40px; }

.main { width: 2186px; padding: 0 150px 0 160px; }
.toolbar { display: flex; align-items: flex-start; width: 140px; height: 76px; margin-left: auto; margin-right: -100px; }
.toolbar span { width: 134px; flex: none; margin-top: -29px; margin-left: -2px; line-height: 40px; }
.dot { width: 8px; height: 8px; flex: none; margin-top: -3px; border-radius: 50%; background: #fff; }
.metrics { display: grid; grid-template-columns: repeat(4, 445px); gap: 32px; }
.number { font-size: 64.8px; line-height: 96px; height: 90px; }
.tabs { display: flex; gap: 32px; height: 80px; margin-top: 50px; box-shadow: inset 0 -4px #27282d; }
.tab { line-height: 40px; padding-top: 14px; }
.tab.active { color: #ec5a53; border-bottom: 4px solid #ec5a53; }
.title { height: 155px; padding-top: 53px; font-size: 50.4px; line-height: 70px; letter-spacing: -1.1px; white-space: nowrap; }
.map { position: relative; height: 985px; overflow: hidden; }
.land { fill: #f2efea; }
.water { fill: #b2d2dd; }
.border path, .river path { fill: none; stroke: #d6c7d1; stroke-width: 2.3; stroke-linejoin: round; vector-effect: non-scaling-stroke; }
.river path { stroke: #cfe0e3; stroke-width: 1.6; }
.red { fill: #c54a35; } .orange { fill: #e79a48; } .blue { fill: #59a6d8; }
.zoom { position: absolute; left: 20px; top: 20px; width: 68px; height: 128px; border: 4px solid rgba(0,0,0,.22); border-radius: 8px; background-clip: padding-box; }
.zoom button { display: block; width: 60px; height: 60px; padding: 0; border: 0; background: linear-gradient(#000,#000) 19px 32px/24px 4px no-repeat, #fff; }
.zoom .plus { border-bottom: 2px solid #ccc; border-radius: 4px 4px 0 0; background: linear-gradient(#000,#000) 19px 32px/24px 4px no-repeat, linear-gradient(#000,#000) 29px 22px/4px 24px no-repeat, #fff; }
.zoom .minus { border-radius: 0 0 4px 4px; }
```
